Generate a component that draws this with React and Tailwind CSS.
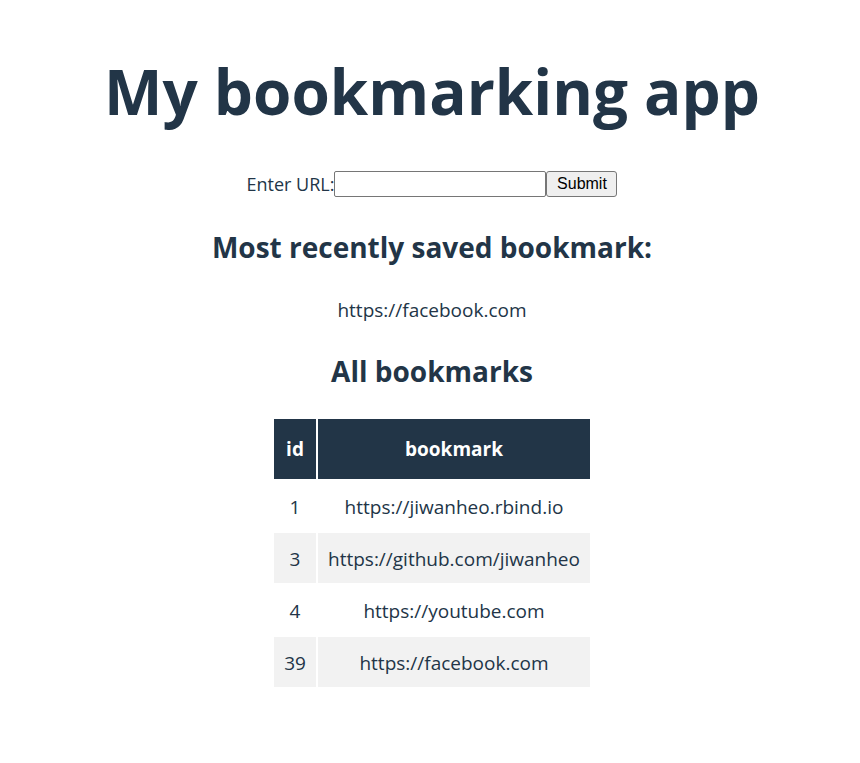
import React from 'react';

const bookmarks = [
  { id: 1, url: 'https://jiwanheo.rbind.io' },
  { id: 3, url: 'https://github.com/jiwanheo' },
  { id: 4, url: 'https://youtube.com' },
  { id: 39, url: 'https://facebook.com' },
];

export default function App() {
  return (
    <div className="min-h-screen bg-white text-[#223547] font-['Open_Sans',sans-serif] flex flex-col items-center pl-[4px]">
      <h1 className="mt-[59px] text-[62px] leading-[64px] font-bold">My bookmarking app</h1>

      {/* URL form */}
      <form className="mt-[48px] flex items-center h-[26px]" onSubmit={(e) => e.preventDefault()}>
        <label className="text-[18px] leading-[26px]">Enter URL:</label>
        <input
          type="text"
          className="w-[212px] h-[26px] border border-[#767676] rounded-[2px] bg-white px-1"
        />
        <button
          type="submit"
          className="w-[71px] h-[26px] border border-[#767676] rounded-[3px] bg-[#efefef] text-black text-[16px] font-['Liberation_Sans',Arial,sans-serif]"
        >
          Submit
        </button>
      </form>

      <h2 className="mt-[36px] text-[28px] leading-[28px] font-bold">Most recently saved bookmark:</h2>
      <p className="mt-[39px] text-[19px] leading-[20px]">https://facebook.com</p>

      <h2 className="mt-[37px] text-[28px] leading-[28px] font-bold">All bookmarks</h2>

      {/* Bookmarks table */}
      <table className="mt-[32px] border-separate border-spacing-[2px] text-[19px]">
        <thead>
          <tr>
            <th className="w-[42px] h-[60px] bg-[#223547] text-white font-bold text-center">id</th>
            <th className="w-[272px] h-[60px] bg-[#223547] text-white font-bold text-center">bookmark</th>
          </tr>
        </thead>
        <tbody>
          {bookmarks.map((b, i) => (
            <tr key={b.id} className={i % 2 === 1 ? 'bg-[#f2f2f2]' : 'bg-white'}>
              <td className="h-[50px] pt-[2px] text-center">{b.id}</td>
              <td className="h-[50px] pt-[2px] text-center whitespace-nowrap">{b.url}</td>
            </tr>
          ))}
        </tbody>
      </table>
    </div>
  );
}
